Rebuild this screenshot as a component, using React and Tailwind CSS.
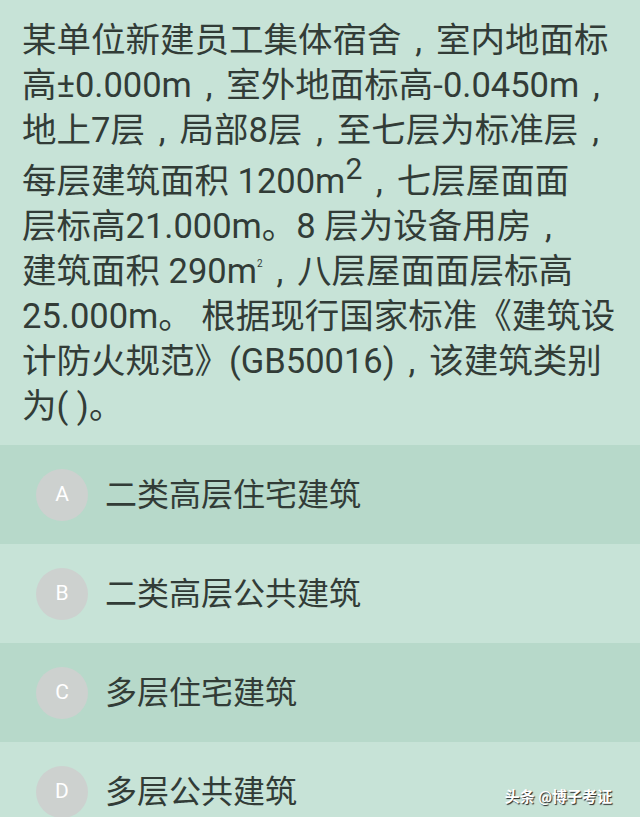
const C = () => <span className="inline-block w-[1em] text-center">,</span>;

const options = [
  { key: "A", text: "二类高层住宅建筑", dark: true },
  { key: "B", text: "二类高层公共建筑", dark: false },
  { key: "C", text: "多层住宅建筑", dark: true },
  { key: "D", text: "多层公共建筑", dark: false },
];

export default function App() {
  return (
    <div
      className="relative h-[817px] w-[640px] overflow-hidden bg-[#c7e3d7] text-[#323c37]"
      style={{ fontFamily: "Roboto, 'Noto Sans CJK SC', sans-serif" }}
    >
      <div className="h-[445px] px-[22px] pt-[18px] text-[34.5px] leading-[45px]">
        <div className="whitespace-nowrap">某单位新建员工集体宿舍<C />室内地面标</div>
        <div className="whitespace-nowrap">高±0.000m<C />室外地面标高-0.0450m<C /></div>
        <div className="whitespace-nowrap">地上7层<C />局部8层<C />至七层为标准层<C /></div>
        <div className="whitespace-nowrap pt-[6px]">
          每层建筑面积 1200m<span className="relative -top-[14px] text-[30px] leading-none">2</span><C />七层屋面面
        </div>
        <div className="whitespace-nowrap">层标高21.000m。8 层为设备用房<C /></div>
        <div className="whitespace-nowrap">
          建筑面积 290m<span className="relative -top-[16px] text-[10px] leading-none">2</span><C />八层屋面面层标高
        </div>
        <div className="whitespace-nowrap">25.000m。 根据现行国家标准《建筑设</div>
        <div className="whitespace-nowrap">计防火规范》(GB50016)<C />该建筑类别</div>
        <div className="whitespace-nowrap">为( )。</div>
      </div>
      {options.map((o) => (
        <div
          key={o.key}
          className={`flex h-[99px] items-center pl-[36px] ${o.dark ? "bg-[#b7d9ca]" : "bg-[#c7e3d7]"}`}
        >
          <div className="flex h-[52px] w-[52px] items-center justify-center rounded-full bg-[#cdd1cf] text-[21px] text-white">
            {o.key}
          </div>
          <div className="pl-[17px] text-[32px] leading-none">{o.text}</div>
        </div>
      ))}
      <div className="absolute bottom-[9px] right-[28px] text-[15px] font-bold text-white [text-shadow:1px_1px_1px_#222]">
        头条 @博子考证
      </div>
    </div>
  );
}
